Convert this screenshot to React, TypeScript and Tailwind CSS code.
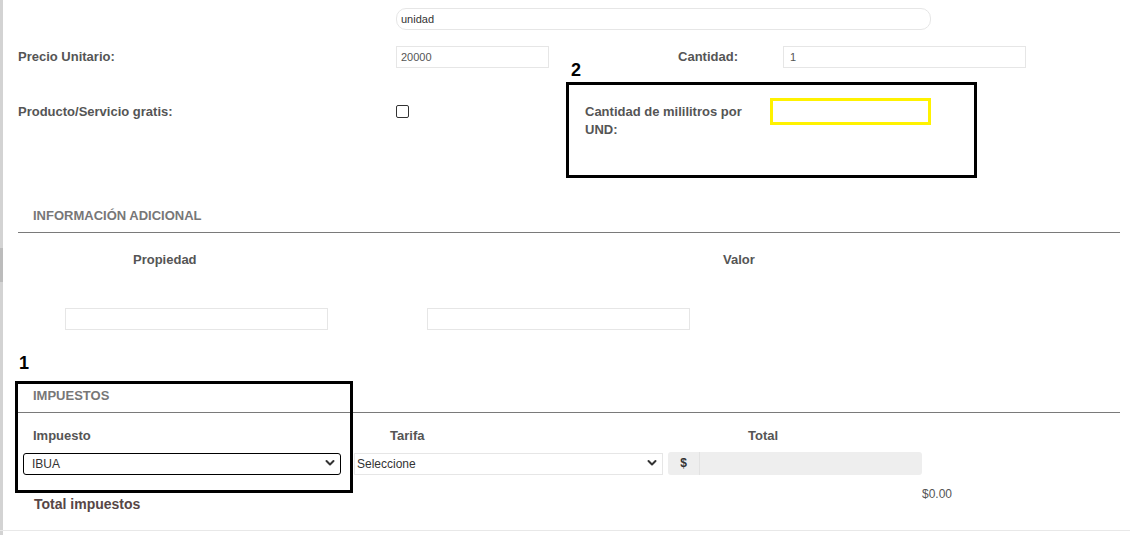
import React from "react";

function Chevron() {
  return (
    <svg
      className="pointer-events-none absolute right-[6px] top-1/2 -translate-y-1/2"
      width="10"
      height="7"
      viewBox="0 0 10 7"
      fill="none"
    >
      <path d="M1.5 1.5 L5 5 L8.5 1.5" stroke="#333" strokeWidth="2" strokeLinecap="round" strokeLinejoin="round" />
    </svg>
  );
}

export default function App() {
  const [gratis, setGratis] = React.useState(false);

  return (
    <div className="relative flex h-[535px] w-full overflow-hidden bg-white font-['Liberation_Sans',Arial,sans-serif] text-[#555]">
      {/* backdrop edge peeking out on the left */}
      <div className="flex w-[3px] flex-col bg-[#d3d3d3]">
        <div className="h-[248px]" />
        <div className="h-[34px] bg-[#bcbcbc]" />
      </div>

      <div className="flex flex-1 flex-col pt-[8px]">
        {/* unidad */}
        <div className="grid grid-cols-[393px_1fr]">
          <div />
          <input
            defaultValue="unidad"
            className="h-[22px] w-[535px] rounded-[10px] border border-[#e6e6e6] px-[4px] text-[11px] text-[#333] outline-none"
          />
        </div>

        {/* precio / cantidad */}
        <div className="mt-[16px] grid h-[22px] grid-cols-[393px_1fr] items-center">
          <label className="pl-[15px] text-[13px] font-bold leading-[18px]">Precio Unitario:</label>
          <div className="flex items-center">
            <input
              defaultValue="20000"
              className="h-[22px] w-[153px] border border-[#e6e6e6] px-[4px] text-[11px] text-[#555] outline-none"
            />
            <div className="w-[234px] pr-[45px] text-right text-[13px] font-bold leading-[18px]">Cantidad:</div>
            <input
              defaultValue="1"
              className="h-[22px] w-[243px] border border-[#e6e6e6] px-[6px] text-[11px] text-[#555] outline-none"
            />
          </div>
        </div>

        {/* gratis / mililitros */}
        <div className="mt-[14px] grid h-[96px] grid-cols-[393px_1fr]">
          <label className="pl-[15px] pt-[21px] text-[13px] font-bold leading-[18px]">Producto/Servicio gratis:</label>
          <div className="flex items-start">
            <input
              type="checkbox"
              checked={gratis}
              onChange={(e) => setGratis(e.target.checked)}
              className="mt-[23px] h-[13px] w-[13px] appearance-none rounded-[2px] border border-[#333] bg-white"
            />
            <div className="relative ml-[157px] flex h-[96px] w-[411px] border-[3px] border-black">
              <span className="absolute left-[2px] top-[-26px] text-[18px] font-bold leading-[22px] text-black">2</span>
              <label className="w-[201px] pl-[16px] pt-[18px] pr-[20px] text-[13px] font-bold leading-[18px]">
                Cantidad de mililitros por UND:
              </label>
              <input className="mt-[13px] h-[27px] w-[161px] border-[3px] border-[#fff200] outline-none" />
            </div>
          </div>
        </div>

        {/* informacion adicional */}
        <div className="mr-[10px] ml-[15px] mt-[29px] border-b border-[#7a7a7a] pb-[7px] pl-[15px] text-[13px] font-bold leading-[18px] text-[#777]">
          INFORMACIÓN ADICIONAL
        </div>
        <div className="mt-[18px] flex text-[13px] font-bold leading-[18px]">
          <span className="ml-[130px] w-[590px]">Propiedad</span>
          <span>Valor</span>
        </div>
        <div className="mt-[39px] flex">
          <input className="ml-[62px] h-[22px] w-[263px] border border-[#e6e6e6] outline-none" />
          <input className="ml-[99px] h-[22px] w-[263px] border border-[#e6e6e6] outline-none" />
        </div>

        {/* impuestos */}
        <div className="mr-[10px] ml-[15px] mt-[57px] border-b border-[#7a7a7a] pb-[7px] pl-[15px] text-[13px] font-bold leading-[18px] text-[#777]">
          IMPUESTOS
        </div>
        <div className="mt-[14px] flex text-[13px] font-bold leading-[18px]">
          <span className="ml-[30px] w-[357px]">Impuesto</span>
          <span className="w-[358px]">Tarifa</span>
          <span>Total</span>
        </div>
        <div className="mt-[6px] flex items-center">
          <div className="relative ml-[20px] w-[318px]">
            <select
              defaultValue="IBUA"
              className="h-[22px] w-full appearance-none rounded-[3px] border-[1.5px] border-black pl-[8px] text-[12px] leading-[18px] text-[#333] outline-none"
            >
              <option>IBUA</option>
              <option>IVA</option>
              <option>INC</option>
            </select>
            <Chevron />
          </div>
          <div className="relative ml-[13px] w-[309px]">
            <select
              defaultValue="Seleccione"
              className="h-[22px] w-full appearance-none border border-[#e6e6e6] pl-[2px] text-[12px] leading-[18px] text-[#333] outline-none"
            >
              <option>Seleccione</option>
            </select>
            <Chevron />
          </div>
          <div className="ml-[5px] flex h-[23px]">
            <span className="flex w-[32px] items-center justify-center rounded-l-[3px] border-r border-[#e2e2e2] bg-[#eeeeee] text-[12px] font-bold text-[#333]">
              $
            </span>
            <input
              readOnly
              className="w-[222px] rounded-r-[3px] bg-[#eeeeee] outline-none"
            />
          </div>
        </div>
        <div className="mt-[12px] grid grid-cols-[919px_1fr] items-start">
          <div className="pl-[31px] pt-[8px] text-[14px] font-bold leading-[18px] text-[#574646]">Total impuestos</div>
          <div className="text-[12px] leading-[14px] text-[#555]">$0.00</div>
        </div>
        <div className="ml-[-3px] mt-[17px] border-t border-[#e8e8e8]" />
      </div>

      {/* annotation 1 */}
      <span className="absolute left-[19px] top-[352px] text-[18px] font-bold leading-[22px] text-black">1</span>
      <div className="pointer-events-none absolute left-[15px] top-[381px] h-[112px] w-[338px] border-[3px] border-black" />
    </div>
  );
}
